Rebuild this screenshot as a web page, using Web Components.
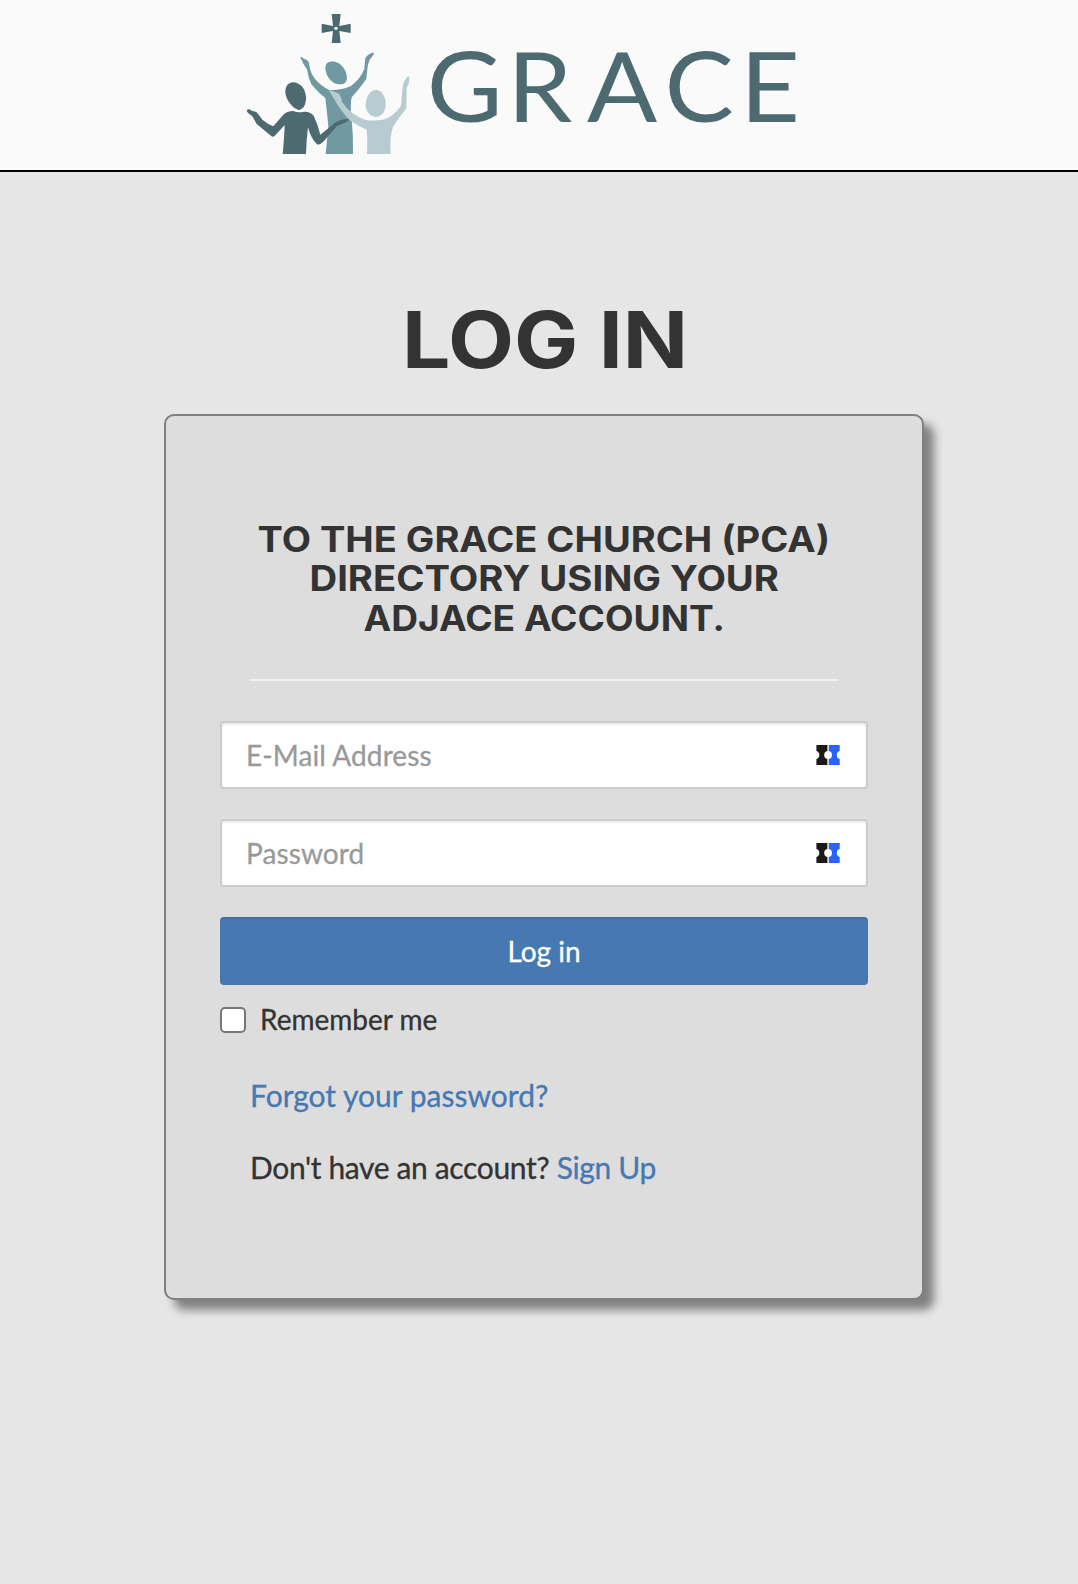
<!DOCTYPE html>
<html lang="en">
<head>
<meta charset="utf-8">
<title>Log in</title>
<style>
body {
   margin: 0;
   min-height: 1584px;
   background: #e6e6e6;
   color: #333;
   font-family: Lato, "Liberation Sans", sans-serif;
   font-size: 30px;
   line-height: 42px;
   -webkit-text-stroke-width: 0.3px;
}
</style>
</head>
<body>
<grace-header></grace-header>
<login-page>
   <caps-title slot="title" class="big" size="78" line="88" lines="LOG IN|402|286"></caps-title>
   <login-card>
      <caps-title slot="title" size="34.8" line="39.5"
         lines="TO THE GRACE CHURCH (PCA)|257.5|572.5;DIRECTORY USING YOUR|309.5|469.5;ADJACE ACCOUNT.|363.5|361.5"></caps-title>
      <text-field type="email" placeholder="E-Mail Address"></text-field>
      <text-field type="password" placeholder="Password"></text-field>
      <submit-button>Log in</submit-button>
      <check-field>Remember me</check-field>
      <card-text slot="footer"><a href="#">Forgot your password?</a></card-text>
      <card-text slot="footer" class="tight">Don't have an account? <a href="#">Sign Up</a></card-text>
   </login-card>
</login-page>

<script>
class BaseElement extends HTMLElement {
   constructor() {
      super();
      this.attachShadow({ mode: 'open' });
   }

   connectedCallback() {
      this.shadowRoot.innerHTML = this.render();
   }
}

class GraceHeader extends BaseElement {
   render() {
      return `
<style>
:host {
   display: block;
   box-sizing: border-box;
   height: 172px;
   padding-left: 235px;
   background: #fafafa;
   border-bottom: 2px solid #000;
}

svg {
   display: block;
}

text {
   font-family: Lato, sans-serif;
   font-size: 291px;
   fill: #4d6a70;
   -webkit-text-stroke-width: 0;
}
</style>
<svg width="576" height="170" viewBox="0 0 1728 510" role="img" aria-label="Grace">
   <!-- cross -->
   <path fill="#4d6a70" d="M290 42h27l-4 36 34-7v28l-34-6 4 36h-27l4-36-34 6V71l34 7z"/>
   <circle cx="303" cy="85" r="5" fill="#fafafa"/>
   <!-- middle figure -->
   <g fill="#7199a2">
      <path d="M278 188C291 180 313 184 326 204C338 222 340 246 326 251C311 257 291 249 281 233C270 217 267 195 278 188z"/>
      <path d="M196 172Q199 168 207 176Q224 181 223 196Q226 220 241 238Q257 258 283 270Q318 272 348 258Q376 237 388 207Q389 190 391 175Q398 162 417 157L415 165L404 179Q399 190 397 207L394 237Q373 267 350 292Q345 317 350 357Q355 407 354 462H272Q277 415 280 379Q276 335 271 294Q249 278 229 253Q219 232 216 208Q204 193 196 172z"/>
   </g>
   <!-- left figure -->
   <g fill="#4d6a70">
      <path d="M174 247C195 248 210 264 213 290C214 314 205 328 190 330C170 322 151 297 151 275C151 258 161 247 174 247z"/>
      <path d="M36 330Q41 325 50 332L64 336Q75 348 82 359Q98 372 115 379L145 344Q156 333 174 333Q191 339 207 335Q225 334 236 347Q249 375 256 404L302 367Q319 357 339 356Q344 358 341 361Q330 370 306 378L269 421Q256 436 246 433Q228 416 219 382Q214 421 213 462H143Q148 411 149 375L121 406Q113 414 106 406L65 372L52 349L39 339Q34 334 36 330z"/>
   </g>
   <!-- right figure -->
   <g fill="#b7cbd1">
      <path d="M424 269C440 270 452 289 452 311C452 335 440 350 421 351C404 350 392 334 392 313C393 289 407 270 424 269z"/>
      <path d="M281 270Q296 274 312 281Q319 291 321 306Q347 344 390 359Q435 367 465 350Q488 335 498 316Q501 285 503 260Q506 241 520 227Q526 234 521 251L515 263L514 325Q494 350 474 380Q463 411 467 462H396Q398 417 395 389Q370 379 344 361Q318 333 303 307Q291 286 281 270z"/>
   </g>
   <text x="538 763 987 1204 1416" y="365" transform="scale(1.07 1)">GRACE</text>
</svg>`;
   }
}

// Uppercase heading, each line fitted to its width: "text|left|width;..."
class CapsTitle extends BaseElement {
   render() {
      const size = +this.getAttribute('size');
      const line = +this.getAttribute('line');
      const lines = this.getAttribute('lines').split(';').map(l => l.split('|'));
      const height = line * lines.length;
      const texts = lines.map(([text, left, width], i) =>
         `<text x="${left}" y="${line * i + size * 0.86}" textLength="${width}" lengthAdjust="spacingAndGlyphs">${text}</text>`
      ).join('');
      return `
<style>
:host {
   display: block;
}

svg {
   display: block;
}

text {
   font-family: Inter, sans-serif;
   font-size: ${size}px;
   font-weight: 700;
   fill: #333;
}
</style>
<svg width="760" height="${height}" viewBox="164 0 760 ${height}" overflow="visible">${texts}</svg>`;
   }
}

class LoginPage extends BaseElement {
   render() {
      return `
<style>
:host {
   display: flex;
   flex-direction: column;
   width: 760px;
   margin: 0 auto;
   padding: 129px 0 0 10px;
}

::slotted(.big) {
   margin-bottom: 25px;
}
</style>
<slot name="title"></slot>
<slot></slot>`;
   }
}

class LoginCard extends BaseElement {
   render() {
      return `
<style>
:host {
   display: flex;
   flex-direction: column;
   box-sizing: border-box;
   width: 760px;
   height: 886px;
   padding: 106px 54px 0;
   background: #ddd;
   border: 2px solid #808080;
   border-radius: 10px;
   box-shadow: 10px 10px 10px #808080;
}

.title {
   height: 118px;
   margin: 0 -56px;
}

hr {
   width: 588px;
   height: 2px;
   margin: 39px auto 40px;
   border: 0;
   background: #eee;
}

.fields {
   display: flex;
   flex-direction: column;
   gap: 30px;
}

.footer {
   display: flex;
   flex-direction: column;
   gap: 30px;
   padding: 35px 30px 0;
}

::slotted(check-field) {
   margin-top: -16px;
}

::slotted(.tight) {
   letter-spacing: -0.36px;
}
</style>
<div class="title"><slot name="title"></slot></div>
<hr>
<div class="fields"><slot></slot></div>
<div class="footer"><slot name="footer"></slot></div>`;
   }
}

class TextField extends BaseElement {
   render() {
      return `
<style>
:host {
   display: flex;
   align-items: center;
   box-sizing: border-box;
   height: 68px;
   padding: 0 26px 0 24px;
   background: #fff;
   border: 2px solid #ccc;
   border-radius: 4px;
   box-shadow: inset 0 2px 2px rgba(0, 0, 0, 0.075);
}

input {
   flex: 1;
   min-width: 0;
   height: 60px;
   padding: 0;
   border: 0;
   outline: 0;
   background: none;
   color: #555;
   font: 28px Lato, sans-serif;
   letter-spacing: 0.1px;
}

input::placeholder {
   color: #999;
   opacity: 1;
}
</style>
<input type="${this.getAttribute('type')}" placeholder="${this.getAttribute('placeholder')}">
<svg width="24" height="20" viewBox="0 0 24 20">
   <path fill="#1d1919" d="M.4 0H11.4V6A4.1 4.1 0 0 0 11.4 14V20H.4V14A4.2 4.2 0 0 0 .4 6z"/>
   <path fill="#2962ff" d="M12.8 0H23.7V6A4.2 4.2 0 0 0 23.7 14V20H12.8V14A4.1 4.1 0 0 0 12.8 6z"/>
</svg>`;
   }
}

class SubmitButton extends BaseElement {
   render() {
      return `
<style>
:host {
   display: block;
}

button {
   display: block;
   width: 100%;
   height: 68px;
   padding: 0;
   border: 0;
   border-radius: 4px;
   background: #4678b2;
   box-shadow: inset 0 3px 2px -1px rgba(0, 0, 0, 0.075);
   color: #fff;
   font: 28px Lato, sans-serif;
}
</style>
<button type="submit"><slot></slot></button>`;
   }
}

class CheckField extends BaseElement {
   render() {
      return `
<style>
:host {
   display: block;
}

label {
   display: flex;
   align-items: center;
   gap: 14px;
   height: 40px;
   font-size: 28px;
   line-height: 40px;
}

input {
   appearance: none;
   box-sizing: border-box;
   width: 26px;
   height: 26px;
   margin: 2px 0 0;
   border: 2px solid #767676;
   border-radius: 5px;
   background: #fff;
}
</style>
<label><input type="checkbox"><span><slot></slot></span></label>`;
   }
}

class CardText extends BaseElement {
   render() {
      return `
<style>
:host {
   display: block;
}

::slotted(a) {
   color: #4678b2;
   text-decoration: none;
}
</style>
<slot></slot>`;
   }
}

customElements.define('grace-header', GraceHeader);
customElements.define('caps-title', CapsTitle);
customElements.define('login-page', LoginPage);
customElements.define('login-card', LoginCard);
customElements.define('text-field', TextField);
customElements.define('submit-button', SubmitButton);
customElements.define('check-field', CheckField);
customElements.define('card-text', CardText);
</script>
</body>
</html>
